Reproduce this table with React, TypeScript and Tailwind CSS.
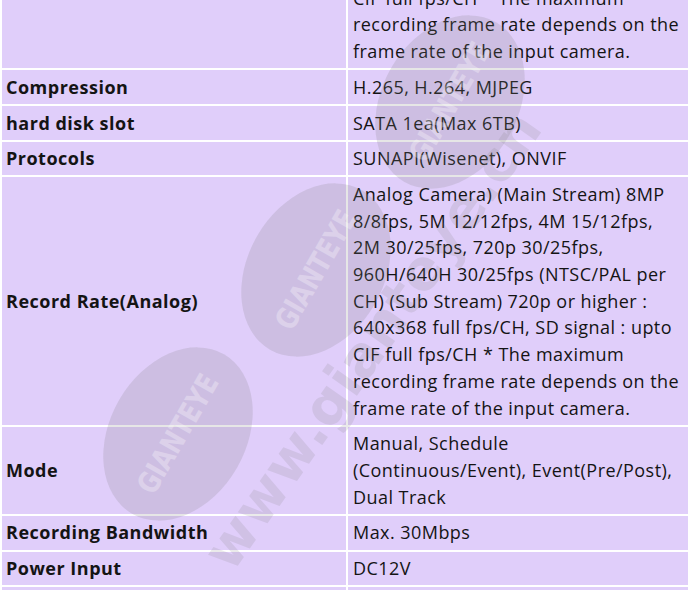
import React from "react";

const analogRate = [
  "Analog Camera) (Main Stream) 8MP",
  "8/8fps, 5M 12/12fps, 4M 15/12fps,",
  "2M 30/25fps, 720p 30/25fps,",
  "960H/640H 30/25fps (NTSC/PAL per",
  "CH) (Sub Stream) 720p or higher :",
  "640x368 full fps/CH, SD signal : upto",
  "CIF full fps/CH * The maximum",
  "recording frame rate depends on the",
  "frame rate of the input camera.",
];

const rows: { label: string; value: string[] }[] = [
  { label: "Record Rate", value: analogRate },
  { label: "Compression", value: ["H.265, H.264, MJPEG"] },
  { label: "hard disk slot", value: ["SATA 1ea(Max 6TB)"] },
  { label: "Protocols", value: ["SUNAPI(Wisenet), ONVIF"] },
  { label: "Record Rate(Analog)", value: analogRate },
  {
    label: "Mode",
    value: ["Manual, Schedule", "(Continuous/Event), Event(Pre/Post),", "Dual Track"],
  },
  { label: "Recording Bandwidth", value: ["Max. 30Mbps"] },
  { label: "Power Input", value: ["DC12V"] },
  { label: "Weight", value: ["1.2kg"] },
];

/* watermark stamps */
function Stamp({ x, y }: { x: number; y: number }) {
  return (
    <g transform={`translate(${x} ${y}) rotate(-60)`}>
      <ellipse rx="92" ry="68" fill="#808080" opacity="0.2" />
      <text
        x="0"
        y="10"
        textAnchor="middle"
        fontSize="30"
        fontWeight="bold"
        fontFamily="'DejaVu Sans Condensed', 'DejaVu Sans', sans-serif"
        fill="#ffffff"
        opacity="0.3"
        textLength="132"
        lengthAdjust="spacingAndGlyphs"
      >
        GIANTEYE
      </text>
    </g>
  );
}

export default function App() {
  return (
    <div className="relative h-[590px] w-[690px] overflow-hidden bg-[#e0cefa] font-['Open_Sans',sans-serif] text-[18px] leading-[26.7px] text-[#141414]">
      {/* spec table */}
      <table className="-mt-[181px] w-full table-fixed border-collapse">
        <tbody>
          {rows.map((row, i) => (
            <tr key={i}>
              <td className="w-[346px] border-2 border-white px-[4px] py-[3.5px] align-middle font-bold tracking-[0.5px]">
                {row.label}
              </td>
              <td className="whitespace-nowrap border-2 border-white px-[5px] py-[3.5px] align-middle tracking-[0.45px]">
                {row.value.map((line, j) => (
                  <span key={j} className="block">
                    {line}
                  </span>
                ))}
              </td>
            </tr>
          ))}
        </tbody>
      </table>

      {/* watermark */}
      <svg
        className="pointer-events-none absolute inset-0"
        width="690"
        height="590"
        viewBox="0 0 690 590"
      >
        <Stamp x={450} y={102} />
        <Stamp x={316} y={270} />
        <Stamp x={178} y={434} />
        <text
          transform="translate(232 574) rotate(-55)"
          fontSize="56"
          fontWeight="bold"
          fontFamily="'DejaVu Sans', sans-serif"
          fill="#808080"
          opacity="0.16"
        >
          www.gianteye.cn
        </text>
      </svg>
    </div>
  );
}
